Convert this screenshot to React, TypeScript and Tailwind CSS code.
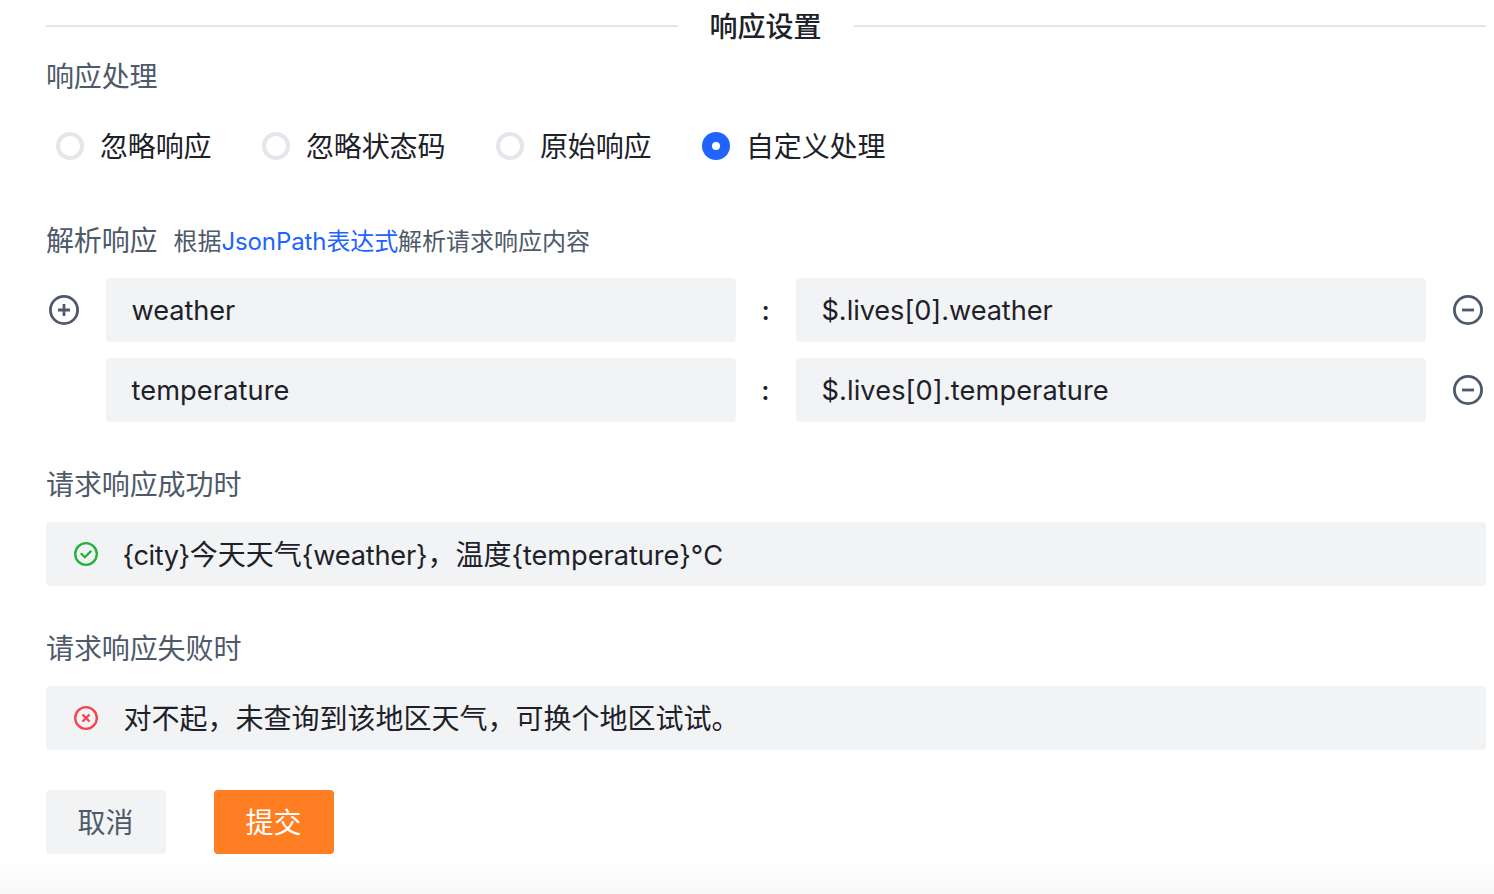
import React from "react";

function Circle({ kind }: { kind: "plus" | "minus" }) {
  return (
    <svg width="32" height="32" viewBox="0 0 32 32" fill="none" stroke="#4e5969" strokeWidth="2.8" className="shrink-0">
      <circle cx="16" cy="16" r="13.6" />
      <path d={kind === "plus" ? "M10 16h12M16 10v12" : "M10 16h12"} />
    </svg>
  );
}

function Radio({ label, width, checked }: { label: string; width: string; checked?: boolean }) {
  return (
    <label className={`flex items-center ${width}`}>
      <span className={`flex h-7 w-7 items-center justify-center rounded-full ${checked ? "bg-[#2163ff]" : "border-4 border-[#e5e6eb]"}`}>
        {checked && <span className="h-2 w-2 rounded-full bg-white" />}
      </span>
      <span className="ml-4 whitespace-nowrap pt-0.5 tracking-[-0.15px]">{label}</span>
    </label>
  );
}

function Row({ name, path, tracking, first }: { name: string; path: string; tracking: string; first?: boolean }) {
  return (
    <div className={`flex h-16 items-center text-[27.2px] ${tracking}`}>
      <div className="w-[60px] pl-0.5">{first && <Circle kind="plus" />}</div>
      <div className="h-16 w-[630px] rounded-[4px] bg-[#f2f3f5] pl-[25.5px] leading-[65px]">{name}</div>
      <div className="w-[60px] pr-px pt-0.5 text-center font-medium">:</div>
      <div className="h-16 w-[630px] rounded-[4px] bg-[#f2f3f5] pl-[25.5px] leading-[65px]">{path}</div>
      <div className="ml-[26px]"><Circle kind="minus" /></div>
    </div>
  );
}

function SectionLabel({ children }: { children: React.ReactNode }) {
  return <div className="mt-10 h-[60px] shrink-0 pt-px leading-[44px] tracking-[-0.1px] text-[#4e5969]">{children}</div>;
}

export default function App() {
  return (
    <div className="flex h-[894px] w-[1494px] flex-col overflow-hidden bg-white pl-[46px] pr-2 font-[Inter,'Noto_Sans_CJK_SC',sans-serif] text-[28px] text-[#1d2129]">
      <div className="flex h-[52px] shrink-0 items-center">
        <div className="h-0.5 w-[632px] bg-[#e5e6eb]" />
        <div className="w-44 pr-px pt-0.5 text-center font-medium">响应设置</div>
        <div className="h-0.5 w-[632px] bg-[#e5e6eb]" />
      </div>
      <div className="h-12 shrink-0 pt-px leading-[48px] tracking-[-0.15px] text-[#4e5969]">响应处理</div>
      <div className="mt-[14px] flex h-16 shrink-0 items-center pl-[10px]">
        <Radio label="忽略响应" width="w-[206px]" />
        <Radio label="忽略状态码" width="w-[234px]" />
        <Radio label="原始响应" width="w-[206px]" />
        <Radio label="自定义处理" width="w-[234px]" checked />
      </div>
      <div className="mt-10 flex h-[60px] shrink-0 items-start text-[#4e5969]">
        <span className="leading-[46px] tracking-[-0.15px]">解析响应</span>
        <span className="ml-4 pt-px text-[24px] leading-[46px]">根据<a className="tracking-[-0.1px] text-[#2163ff]">JsonPath表达式</a>解析请求响应内容</span>
      </div>
      <div className="flex flex-col gap-4">
        <Row name="weather" path="$.lives[0].weather" tracking="tracking-[-0.07px]" first />
        <Row name="temperature" path="$.lives[0].temperature" tracking="tracking-[0.1px]" />
      </div>
      <SectionLabel>请求响应成功时</SectionLabel>
      <div className="flex h-16 shrink-0 items-center rounded-[4px] bg-[#f2f3f5] pl-7">
        <svg width="24" height="24" viewBox="0 0 24 24" fill="none" stroke="#1fb436" strokeWidth="2.3">
          <circle cx="12" cy="12" r="10.8" />
          <path d="m6.8 11.2 4.1 4 6.3-6.3" />
        </svg>
        <span className="ml-[24.5px] whitespace-pre pt-0.5">
          <span className="text-[27.2px] tracking-[-0.4px]">{"{city}"}</span>今天天气<span className="text-[27.2px] tracking-[-0.2px]">{"{weather}"}</span>，温度<span className="text-[27.2px] tracking-[-0.05px]">{"{temperature}°C"}</span>
        </span>
      </div>
      <SectionLabel>请求响应失败时</SectionLabel>
      <div className="flex h-16 shrink-0 items-center rounded-[4px] bg-[#f2f3f5] pl-7">
        <svg width="24" height="24" viewBox="0 0 24 24" fill="none" stroke="#f7434b" strokeWidth="2.3">
          <circle cx="12" cy="12" r="10.8" />
          <path d="m8.5 8.5 7 7m0-7-7 7" />
        </svg>
        <span className="ml-[25.5px] pt-0.5">对不起，未查询到该地区天气，可换个地区试试。</span>
      </div>
      <div className="mt-10 flex shrink-0 gap-12">
        <button className="h-16 w-[120px] rounded-[4px] bg-[#f2f3f5] pr-px pt-0.5 text-[#4e5969]">取消</button>
        <button className="h-16 w-[120px] rounded-[4px] bg-[#ff7d23] pr-px pt-0.5 text-white">提交</button>
      </div>
      <div className="-mr-2 -ml-[46px] h-10 shrink-0 bg-linear-to-b from-white via-[#fcfcfc] to-[#f7f7f7]" />
    </div>
  );
}
